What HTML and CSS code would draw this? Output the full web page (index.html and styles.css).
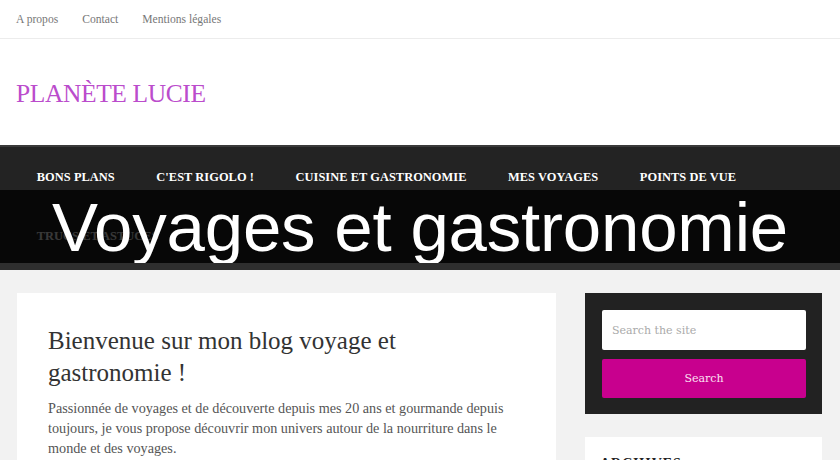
FILE: index.html
```html
<!DOCTYPE html>
<html lang="fr">
<head>
<meta charset="utf-8">
<title>Planète Lucie</title>
<link rel="stylesheet" href="styles.css">
</head>
<body>
<div class="topbar">
  <a href="#">A propos</a>
  <a href="#">Contact</a>
  <a href="#">Mentions légales</a>
</div>
<header class="site-header">
  <div class="site-title">PLANÈTE LUCIE</div>
</header>
<nav class="mainnav">
  <div class="navrow">
    <a href="#">BONS PLANS</a>
    <a href="#">C'EST RIGOLO !</a>
    <a href="#">CUISINE ET GASTRONOMIE</a>
    <a href="#">MES VOYAGES</a>
    <a href="#">POINTS DE VUE</a>
  </div>
  <div class="navrow">
    <a href="#">TRUCS ET ASTUCES</a>
  </div>
  <div class="banner">Voyages et gastronomie</div>
</nav>
<main class="main">
  <article class="card">
    <h1>Bienvenue sur mon blog voyage et gastronomie !</h1>
    <p>Passionnée de voyages et de découverte depuis mes 20 ans et gourmande depuis toujours, je vous propose découvrir mon univers autour de la nourriture dans le monde et des voyages.</p>
  </article>
  <aside class="sidebar">
    <div class="searchbox">
      <div class="search-input">Search the site</div>
      <div class="search-btn">Search</div>
    </div>
    <div class="widget">
      <h3>ARCHIVES</h3>
    </div>
  </aside>
</main>
</body>
</html>
```
FILE: styles.css
```css
* { box-sizing: border-box; }
html, body { margin: 0; padding: 0; }
body {
  width: 840px;
  height: 460px;
  overflow: hidden;
  background: #f2f2f2;
  font-family: "Liberation Serif", "DejaVu Serif", serif;
}
a { text-decoration: none; }
.topbar {
  height: 39px;
  background: #fff;
  border-bottom: 1px solid #ececec;
  display: flex;
  align-items: center;
  padding: 0 16px;
  gap: 24px;
}
.topbar a {
  font-size: 11.6px;
  color: #777;
}
.site-header {
  height: 106px;
  background: #fff;
  display: flex;
  align-items: center;
  padding: 4px 16px 0;
}
.site-title {
  font-size: 25.5px;
  color: #bb4ccc;
  letter-spacing: -0.4px;
}
.mainnav {
  position: relative;
  background: #232323;
  border-top: 2px solid #3a3a3a;
  height: 125px;
  padding: 0 16px;
}
.navrow {
  display: flex;
  height: 59px;
  align-items: center;
  padding-top: 1px;
}
.navrow a {
  color: #fff;
  font-weight: bold;
  font-size: 12.4px;
  padding: 0 20.8px;
  letter-spacing: 0.05px;
}
.banner {
  position: absolute;
  left: 0;
  right: 0;
  top: 43px;
  height: 73px;
  background: rgba(0, 0, 0, 0.78);
  color: #fff;
  font-family: "Liberation Sans", Arial, sans-serif;
  font-size: 69px;
  line-height: 73px;
  text-align: center;
  padding-top: 1px;
  letter-spacing: -0.2px;
}
.mainnav::after {
  content: "";
  position: absolute;
  left: 0; right: 0; bottom: 0;
  height: 7px;
  background: #2e2e2e;
}
.main {
  display: flex;
  align-items: flex-start;
  padding: 23px 18px 0 17px;
  gap: 29px;
}
.card {
  width: 539px;
  height: 200px;
  background: #fff;
  padding: 32px 31px;
}
.card h1 {
  margin: 0 0 9px;
  font-weight: normal;
  font-size: 25px;
  line-height: 32px;
  color: #333;
}
.card p {
  margin: 0;
  font-size: 14.2px;
  line-height: 20px;
  color: #555;
}
.sidebar {
  width: 237px;
  display: flex;
  flex-direction: column;
  gap: 23px;
}
.searchbox {
  background: #222;
  padding: 17px 16px 16px 17px;
  display: flex;
  flex-direction: column;
  gap: 9px;
}
.search-input {
  height: 40px;
  background: #fff;
  border-radius: 2px;
  padding: 0 10px;
  display: flex;
  align-items: center;
  font-family: "DejaVu Serif", serif;
  font-size: 11px;
  color: #aaa;
}
.search-btn {
  height: 39px;
  background: #c8008e;
  border-radius: 2px;
  display: flex;
  align-items: center;
  justify-content: center;
  font-family: "DejaVu Serif", serif;
  font-size: 11px;
  color: #fbe0f2;
}
.widget {
  background: #fff;
  height: 80px;
  padding: 19px 15px;
}
.widget h3 {
  margin: 0;
  font-size: 14px;
  color: #222;
  letter-spacing: 1px;
}
```
